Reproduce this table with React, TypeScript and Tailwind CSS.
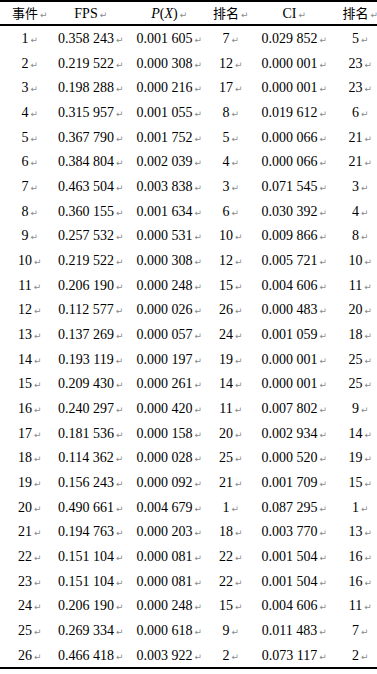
import * as React from 'react';

// event, FPS, P(X), rank, CI, rank
const ROWS: [string, string, string, string, string, string][] = [
  ['1', '0.358 243', '0.001 605', '7', '0.029 852', '5'],
  ['2', '0.219 522', '0.000 308', '12', '0.000 001', '23'],
  ['3', '0.198 288', '0.000 216', '17', '0.000 001', '23'],
  ['4', '0.315 957', '0.001 055', '8', '0.019 612', '6'],
  ['5', '0.367 790', '0.001 752', '5', '0.000 066', '21'],
  ['6', '0.384 804', '0.002 039', '4', '0.000 066', '21'],
  ['7', '0.463 504', '0.003 838', '3', '0.071 545', '3'],
  ['8', '0.360 155', '0.001 634', '6', '0.030 392', '4'],
  ['9', '0.257 532', '0.000 531', '10', '0.009 866', '8'],
  ['10', '0.219 522', '0.000 308', '12', '0.005 721', '10'],
  ['11', '0.206 190', '0.000 248', '15', '0.004 606', '11'],
  ['12', '0.112 577', '0.000 026', '26', '0.000 483', '20'],
  ['13', '0.137 269', '0.000 057', '24', '0.001 059', '18'],
  ['14', '0.193 119', '0.000 197', '19', '0.000 001', '25'],
  ['15', '0.209 430', '0.000 261', '14', '0.000 001', '25'],
  ['16', '0.240 297', '0.000 420', '11', '0.007 802', '9'],
  ['17', '0.181 536', '0.000 158', '20', '0.002 934', '14'],
  ['18', '0.114 362', '0.000 028', '25', '0.000 520', '19'],
  ['19', '0.156 243', '0.000 092', '21', '0.001 709', '15'],
  ['20', '0.490 661', '0.004 679', '1', '0.087 295', '1'],
  ['21', '0.194 763', '0.000 203', '18', '0.003 770', '13'],
  ['22', '0.151 104', '0.000 081', '22', '0.001 504', '16'],
  ['23', '0.151 104', '0.000 081', '22', '0.001 504', '16'],
  ['24', '0.206 190', '0.000 248', '15', '0.004 606', '11'],
  ['25', '0.269 334', '0.000 618', '9', '0.011 483', '7'],
  ['26', '0.466 418', '0.003 922', '2', '0.073 117', '2'],
];

const COLS = 'grid grid-cols-[50px_72px_85px_38px_89px_43px]';

// Word paragraph mark, kept out of the centering
function Mark() {
  return (
    <span className="w-0 overflow-visible whitespace-nowrap">
      <span className="ml-[2px] text-[9px] text-[#8a8a8a] font-['DejaVu_Sans',sans-serif] leading-none">↵</span>
    </span>
  );
}

function Cell({ children }: { children: React.ReactNode }) {
  return (
    <div className="flex items-center justify-center whitespace-nowrap">
      {children}
      <Mark />
    </div>
  );
}

const CJK = "font-['Noto_Sans_CJK_SC',sans-serif] text-[13px]";

export default function App() {
  return (
    <div className="w-[377px] h-[674px] bg-white text-black font-['Liberation_Serif','Noto_Sans_CJK_SC',serif] text-[14px]">
      <div className="border-t-2 border-b-2 border-black">
        <div className={`${COLS} h-[24px] border-b-2 border-black`}>
          <Cell><span className={CJK}>事件</span></Cell>
          <Cell>FPS</Cell>
          <Cell>
            <span>
              <i>P</i>(<i>X</i>)
            </span>
          </Cell>
          <Cell><span className={CJK}>排名</span></Cell>
          <Cell>CI</Cell>
          <Cell><span className={CJK}>排名</span></Cell>
        </div>
        {ROWS.map(row => (
          <div key={row[0]} className={`${COLS} h-[24.68px]`}>
            {row.map((v, i) => (
              <Cell key={i}>{v}</Cell>
            ))}
          </div>
        ))}
      </div>
    </div>
  );
}
